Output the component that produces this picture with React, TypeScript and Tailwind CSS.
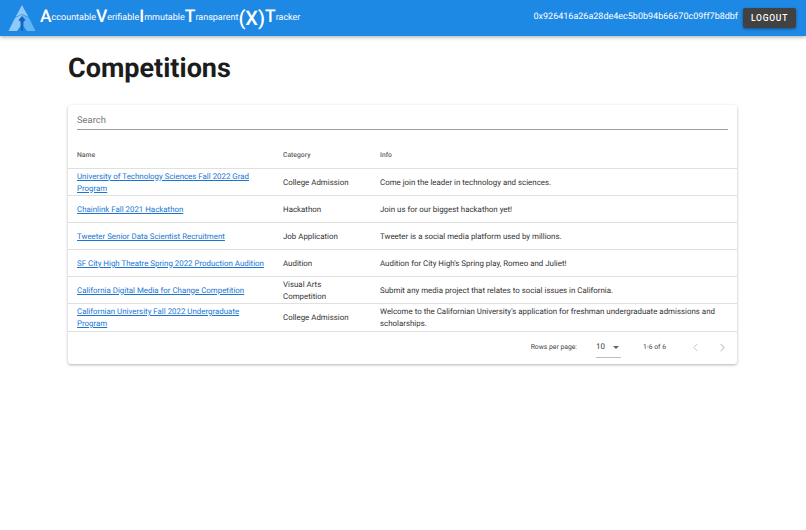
import React from 'react';
import { ChevronLeft, ChevronRight } from 'lucide-react';

interface Competition {
  name: string;
  category: string;
  info: string;
}

const competitions: Competition[] = [
  {
    name: 'University of Technology Sciences Fall 2022 Grad Program',
    category: 'College Admission',
    info: 'Come join the leader in technology and sciences.',
  },
  { name: 'Chainlink Fall 2021 Hackathon', category: 'Hackathon', info: 'Join us for our biggest hackathon yet!' },
  {
    name: 'Tweeter Senior Data Scientist Recruitment',
    category: 'Job Application',
    info: 'Tweeter is a social media platform used by millions.',
  },
  {
    name: 'SF City High Theatre Spring 2022 Production Audition',
    category: 'Audition',
    info: "Audition for City High's Spring play, Romeo and Juliet!",
  },
  {
    name: 'California Digital Media for Change Competition',
    category: 'Visual Arts Competition',
    info: 'Submit any media project that relates to social issues in California.',
  },
  {
    name: 'Californian University Fall 2022 Undergraduate Program',
    category: 'College Admission',
    info: "Welcome to the Californian University's application for freshman undergraduate admissions and scholarships.",
  },
];

const brand = [
  ['A', 'ccountable'],
  ['V', 'erifiable'],
  ['I', 'mmutable'],
  ['T', 'ransparent'],
  ['(X)', ''],
  ['T', 'racker'],
];

function Logo() {
  return (
    <svg width="28" height="28" viewBox="0 0 28 28" className="shrink-0">
      <polygon points="14,1 20.5,13 14,10 7.5,13" fill="#90caf9" />
      <polygon points="7,14 14,10.5 14,20 9,27 0.5,27" fill="#90caf9" />
      <polygon points="21,14 14,10.5 14,20 19,27 27.5,27" fill="#64b5f6" />
      <polygon points="14,12 17.5,16 15.6,17.5 15,27 13,27 12.4,17.5 10.5,16" fill="#1565c0" />
    </svg>
  );
}

export default function App() {
  return (
    <div className="min-h-[530px] bg-white font-['Roboto',sans-serif] text-[#333333] antialiased [text-rendering:geometricPrecision]">
      {/* 상단 바 */}
      <header className="flex h-9 items-center justify-between bg-[#1e88e5] pl-[8px] pr-[10px] text-white shadow-[0_1px_4px_rgba(0,0,0,0.35)]">
        <div className="flex items-center">
          <Logo />
          <div className="ml-[4px] flex items-center">
            {brand.map(([big, rest], i) => (
              <span key={i} className="flex items-center">
                <span className={`font-medium leading-none ${big === '(X)' ? 'text-[20px]' : 'text-[17.5px]'}`}>{big}</span>
                {rest && <span className="text-[9px] leading-none">{rest}</span>}
              </span>
            ))}
          </div>
        </div>
        <div className="flex items-center gap-[5px]">
          <span className="text-[9px]">0x926416a26a28de4ec5b0b94b66670c09ff7b8dbf</span>
          <button className="flex h-[20px] w-[53px] items-center justify-center rounded-[2px] bg-[#424242] text-[8.5px] font-medium tracking-[0.09em] shadow-[0_1px_3px_rgba(0,0,0,0.4)]">
            LOGOUT
          </button>
        </div>
      </header>

      <main className="pl-[68px] pr-[69px]">
        <h1 className="mb-[5px] flex h-[64px] items-center text-[27px] font-bold text-[#1c1c1c]">Competitions</h1>

        {/* 표 카드 */}
        <section className="rounded-[3px] bg-white shadow-[0_1px_3px_rgba(0,0,0,0.3)]">
          <div className="px-[9px] pt-[9px]">
            <div className="flex h-[16px] items-center border-b border-[#9e9e9e] text-[9.4px] text-[#757575]">
              Search
            </div>
          </div>

          <table className="mt-[12px] w-full table-fixed border-collapse text-[7.9px]">
            <colgroup>
              <col className="w-[215px]" />
              <col className="w-[97px]" />
              <col />
            </colgroup>
            <thead>
              <tr className="h-[26px] border-b border-[#e0e0e0] text-left text-[6.8px] text-[#616161]">
                <th className="pl-[9px] font-medium">Name</th>
                <th className="font-medium">Category</th>
                <th className="pr-[9px] font-medium">Info</th>
              </tr>
            </thead>
            <tbody>
              {competitions.map((c, i) => (
                <tr
                  key={c.name}
                  className={`border-b border-[#e0e0e0] leading-[12px] ${i === competitions.length - 1 ? 'h-[28px]' : 'h-[27px]'}`}
                >
                  <td className="pl-[9px] pr-[14px] pt-[2px]">
                    <a href="#" className="text-[#1976d2] underline">
                      {c.name}
                    </a>
                  </td>
                  <td className="pr-[16px] pt-[2px]">{c.category}</td>
                  <td className="pr-[9px] pt-[2px]">{c.info}</td>
                </tr>
              ))}
            </tbody>
          </table>

          {/* 페이지네이션 */}
          <div className="flex h-[32px] items-center justify-end pr-[8px] text-[6.8px] text-[#424242]">
            <span>Rows per page:</span>
            <div className="ml-[19px] flex h-[20px] w-[25px] items-center justify-between border-b border-[#bdbdbd] text-[7.9px]">
              <span>10</span>
              <span className="mr-[2px] h-0 w-0 border-x-[3.5px] border-t-[3.5px] border-x-transparent border-t-[#616161]" />
            </div>
            <span className="ml-[22px] w-[23px] whitespace-nowrap">1-6 of 6</span>
            <ChevronLeft className="ml-[23px] text-[#bdbdbd]" size={13} strokeWidth={1.6} />
            <ChevronRight className="ml-[14px] text-[#9e9e9e]" size={13} strokeWidth={1.6} />
          </div>
        </section>
      </main>
    </div>
  );
}
